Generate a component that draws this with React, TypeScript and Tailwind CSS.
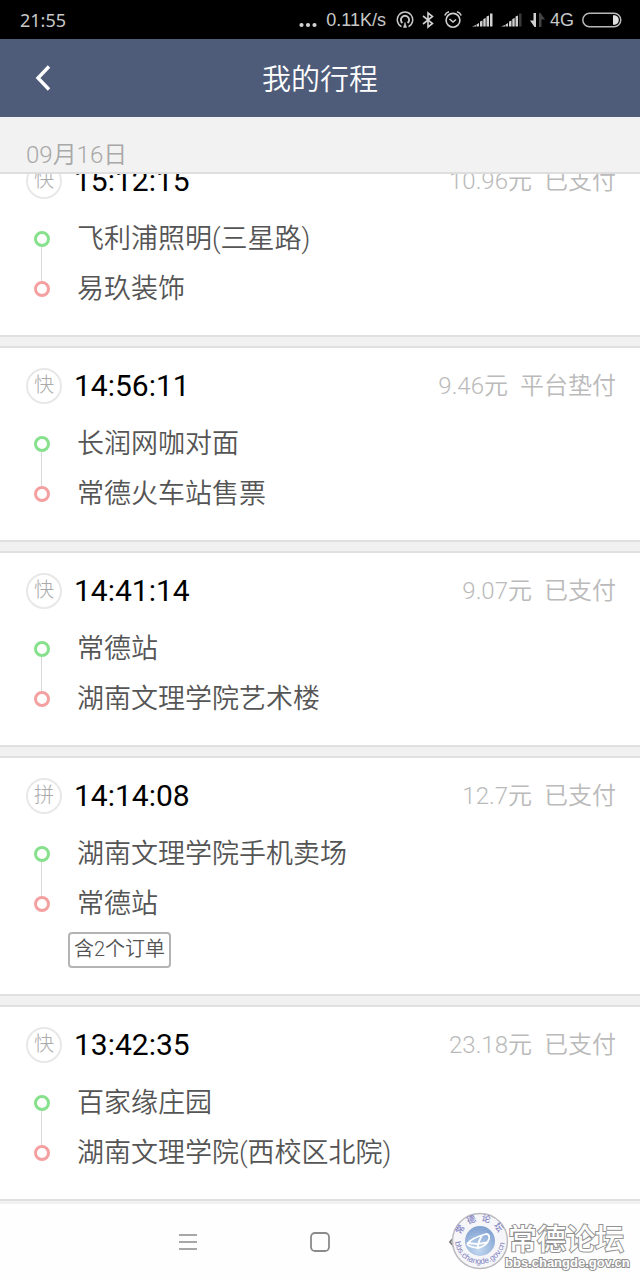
import type { ReactNode } from 'react'

interface Trip {
  kind: string
  time: string
  price: string
  status: string
  from: string
  to: string
  orders?: string
}

const trips: Trip[] = [
  { kind: '快', time: '15:12:15', price: '10.96元', status: '已支付', from: '飞利浦照明(三星路)', to: '易玖装饰' },
  { kind: '快', time: '14:56:11', price: '9.46元', status: '平台垫付', from: '长润网咖对面', to: '常德火车站售票' },
  { kind: '快', time: '14:41:14', price: '9.07元', status: '已支付', from: '常德站', to: '湖南文理学院艺术楼' },
  { kind: '拼', time: '14:14:08', price: '12.7元', status: '已支付', from: '湖南文理学院手机卖场', to: '常德站', orders: '含2个订单' },
  { kind: '快', time: '13:42:35', price: '23.18元', status: '已支付', from: '百家缘庄园', to: '湖南文理学院(西校区北院)' },
]

function SignalIcon({ dimLast = false }: { dimLast?: boolean }) {
  return (
    <svg className="h-4 w-[21px]" viewBox="0 0 21 16" fill="#d0d0d0">
      <path d="M0 14.500L4 13V14.500Z" />
      <path d="M4.500 12.500L7 11V14.500H4.500Z" />
      <path d="M8 9.500L10.500 8.500V14.500H8Z" />
      <path d="M11.300 7L13.700 6V14.500H11.300Z" />
      <path d="M14.500 4.500L17 3.500V14.500H14.500Z" />
      <path d="M18 1.500H20.500V14.500H18Z" fill={dimLast ? '#3a3a3a' : '#d0d0d0'} />
    </svg>
  )
}

function StatusBar() {
  return (
    <div className="flex h-[39px] items-center justify-between bg-black pr-[18px] pl-5 text-[#c8c8c8]">
      <span className="font-['Noto_Sans',sans-serif] text-lg">21:55</span>
      <div className="flex items-center font-['Liberation_Sans',sans-serif] text-lg">
        <svg className="mr-2 h-5 w-[19px]" viewBox="0 0 19 20" fill="#d0d0d0">
          <circle cx="2.5" cy="15" r="2.1" />
          <circle cx="9" cy="15" r="2.1" />
          <circle cx="15.5" cy="15" r="2.1" />
        </svg>
        <span className="mr-2.5">0.11K/s</span>
        <svg className="mr-2 h-5 w-[18px]" viewBox="0 0 18 20" fill="none" stroke="#c8c8c8" strokeWidth="1.5">
          <path d="M5.500 16.600A7.700 7.700 0 1 1 12.500 16.600" />
          <path d="M6.400 13A4.100 4.100 0 1 1 11.600 13" strokeWidth="1.9" />
          <path d="M9 12.500L10.500 17.500H7.500Z" fill="#c8c8c8" strokeWidth="0.6" />
        </svg>
        <svg className="mr-2.5 h-5 w-3" viewBox="0 0 12 20" fill="none" stroke="#d0d0d0" strokeWidth="1.6">
          <path d="M1 6L10.500 13.500L6 17V3L10.500 6.500L1 14" />
        </svg>
        <svg className="mr-2.5 h-5 w-[18px]" viewBox="0 0 18 20" fill="none" stroke="#d0d0d0" strokeWidth="1.6">
          <circle cx="9" cy="10.3" r="6.900" />
          <path d="M5.500 9L9 12L12 9.500" />
          <path d="M0.800 5.500Q2 2.500 5 1.800M17.200 5.500Q16 2.500 13 1.800" />
        </svg>
        <span className="mr-2"><SignalIcon /></span>
        <span className="mr-2"><SignalIcon dimLast /></span>
        <svg className="mr-1 h-4 w-4" viewBox="0 0 16 16">
          <path d="M0 8.500H3.500V1H6V15H4.500Z" fill="#d0d0d0" />
          <path d="M15 7.500H11.500V15H9V1H10.500Z" fill="#444" />
        </svg>
        <span className="mr-2">4G</span>
        <svg className="h-4 w-10" viewBox="0 0 40 16">
          <rect x="0.8" y="1.3" width="38" height="13.4" rx="6.7" fill="none" stroke="#b8b8b8" strokeWidth="1.5" />
          <path d="M31 3.2H33Q36.800 4.500 36.800 8T33 12.800H31Z" fill="#e0e0e0" />
        </svg>
      </div>
    </div>
  )
}

function Stop({ name, dot, linked = false }: { name: string; dot: ReactNode; linked?: boolean }) {
  return (
    <li className="flex h-[50px] items-center">
      <span className="relative flex w-9 justify-center">
        {linked && <span className="absolute top-4 left-[17px] h-9 w-px bg-[#d8d8d8]" />}
        {dot}
      </span>
      <span className="ml-[17px] text-[27px] font-[350] text-[#555]">{name}</span>
    </li>
  )
}

function TripCard({ trip }: { trip: Trip }) {
  return (
    <li className="border-y-2 border-[#e0e0e0] bg-white px-6 pt-5 pb-[21px]">
      <div className="flex h-9 items-center">
        <span className="ml-0.5 flex h-9 w-9 items-center justify-center rounded-full border-2 border-[#e8e8e8] pb-0.5 text-xl font-light text-[#aaa]">
          {trip.kind}
        </span>
        <time className="ml-3 pb-0.5 text-[30px] text-black">{trip.time}</time>
        <span className="ml-auto flex gap-3 text-2xl font-[350] text-[#bababa]">
          <span>{trip.price}</span>
          <span>{trip.status}</span>
        </span>
      </div>
      <ul className="mt-[15px]">
        <Stop linked name={trip.from} dot={<span className="relative h-4 w-4 rounded-full border-3 border-[#86e08c]" />} />
        <Stop name={trip.to} dot={<span className="relative h-4 w-4 rounded-full border-3 border-[#f5a0a0]" />} />
      </ul>
      {trip.orders && (
        <button className="mt-[3px] mb-[5px] ml-11 flex h-9 items-center rounded-sm border-2 border-[#b4b4b4] px-1 pb-0.5 text-xl font-[350] text-[#555]">
          {trip.orders}
        </button>
      )}
    </li>
  )
}

function ForumMark() {
  return (
    <svg className="pointer-events-none absolute right-2 bottom-1 h-16 w-[184px]" viewBox="0 0 184 64">
      <defs>
        <radialGradient id="globe" cx="0.45" cy="0.8" r="0.8">
          <stop offset="0" stopColor="#c3d9f0" />
          <stop offset="1" stopColor="#7f9fd0" />
        </radialGradient>
        <path id="ringTop" d="M12 29A20 20 0 0 1 52 29" />
        <path id="ringBottom" d="M7 27A25 25 0 1 0 57 27" />
      </defs>
      <circle cx="32" cy="29" r="27.500" fill="#f6f6f8" stroke="#bcbcc0" strokeWidth="1.5" />
      <circle cx="32" cy="29" r="15" fill="url(#globe)" />
      <path d="M30 36Q17 34 20 31Q24 26 38 22Q42 22 41 27Q39 34 30 36Q30 29 34 24M20 31Q30 33 40 30" fill="none" stroke="#fff" strokeWidth="1.8" />
      <text className="font-['Noto_Sans_CJK_SC',sans-serif] text-[9px] font-medium" fill="#8585c4">
        <textPath href="#ringTop" startOffset="6">常{'\u00a0\u00a0'}德{'\u00a0\u00a0'}论{'\u00a0\u00a0'}坛</textPath>
      </text>
      <text className="font-['Liberation_Sans',sans-serif] text-[8px]" fill="#7f7fc0">
        <textPath href="#ringBottom" startOffset="3">bbs.changde.gov.cn</textPath>
      </text>
      <text x="60" y="38" className="font-['Noto_Sans_CJK_SC',sans-serif] text-[29px] font-medium" fill="#fff" stroke="#929292" strokeWidth="2" paintOrder="stroke">
        常德论坛
      </text>
      <text x="57" y="55" className="font-['Liberation_Sans',sans-serif] text-[13px] font-bold" fill="#fff" stroke="#929292" strokeWidth="2" paintOrder="stroke">
        bbs.changde.gov.cn
      </text>
    </svg>
  )
}

function NavBar() {
  return (
    <nav className="relative flex h-[76px] items-center justify-center bg-[#fefefe]">
      <button aria-label="Menu" className="flex w-33 justify-center">
        <svg className="h-5 w-5" viewBox="0 0 20 20" stroke="#8a8a8a" strokeWidth="1.6">
          <path d="M1 3H19M1 10H19M1 17H19" />
        </svg>
      </button>
      <button aria-label="Home" className="flex w-33 justify-center">
        <svg className="h-5 w-5" viewBox="0 0 20 20" fill="none" stroke="#8a8a8a" strokeWidth="1.8">
          <rect x="1" y="1" width="18" height="18" rx="4" />
        </svg>
      </button>
      <button aria-label="Back" className="flex w-33 justify-center">
        <svg className="h-5 w-5" viewBox="0 0 20 20" fill="none" stroke="#777" strokeWidth="1.8">
          <path d="M15 2L8 10L15 18" />
        </svg>
      </button>
      <ForumMark />
    </nav>
  )
}

export default function App() {
  return (
    <div className="min-h-screen bg-[#fefefe] font-[Roboto,'Noto_Sans_CJK_SC',sans-serif]">
      <StatusBar />
      <header className="grid h-[78px] grid-cols-[86px_1fr_86px] items-center bg-[#4e5c79] text-white">
        <button aria-label="返回" className="flex h-full items-center justify-center">
          <svg className="h-7 w-5" viewBox="0 0 20 28" fill="none" stroke="#fff" strokeWidth="3.4">
            <path d="M16 2.500L5 14L16 25.500" />
          </svg>
        </button>
        <h1 className="pt-1.5 text-center text-[29px] font-[350]">我的行程</h1>
      </header>
      <main className="bg-[#f1f1f1]">
        <h2 className="relative z-10 flex h-[57px] items-end border-b-2 border-[#dedede] bg-[#f2f2f2] pb-px pl-[26px] text-2xl font-[350] text-[#a8a8a8]">
          09月16日
        </h2>
        <ul className="-mt-[33px] flex flex-col gap-[9px] pb-[3px]">
          {trips.map((trip) => (
            <TripCard key={trip.time} trip={trip} />
          ))}
        </ul>
      </main>
      <NavBar />
    </div>
  )
}
